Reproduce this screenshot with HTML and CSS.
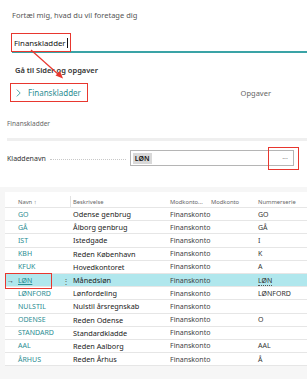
FILE: index.html
```html
<!DOCTYPE html>
<html lang="da">
<head>
    <meta charset="UTF-8">
    <meta name="viewport" content="width=device-width, initial-scale=1.0">
    <title>Finanskladder</title>
    <link rel="stylesheet" href="styles.css">
</head>
<body>
<div class="page">
    <div class="tell-me">
        <p class="prompt">Fortæl mig, hvad du vil foretage dig</p>
        <div class="search">
            <span class="search-text mark">Finanskladder<span class="caret"></span></span>
        </div>
        <h2 class="group-title">Gå til Sider og opgaver</h2>
        <div class="result-row">
            <div class="result mark">
                <svg class="chevron" width="5" height="8" viewBox="0 0 5 8"><path d="M0.8 0.6 L4.2 4 L0.8 7.4" fill="none" stroke="#3a9ea3" stroke-width="0.9"/></svg>
                <span>Finanskladder</span>
            </div>
            <span class="result-type">Opgaver</span>
        </div>
    </div>

    <div class="journal">
        <p class="page-caption">Finanskladder</p>
        <div class="divider"></div>
        <div class="field">
            <span class="field-label">Kladdenavn</span>
            <span class="leader"></span>
            <div class="field-input">
                <span class="selected">LØN</span>
                <span class="assist">···</span>
                <span class="assist-mark"></span>
            </div>
        </div>
    </div>

    <div class="list-area">
        <div class="list">
            <div class="row head">
                <span></span>
                <span class="sep">Navn ↑</span>
                <span>Beskrivelse</span>
                <span>Modkonto...</span>
                <span>Modkonto</span>
                <span>Nummerserie</span>
            </div>
            <div class="row"><span></span><span class="name">GO</span><span class="desc">Odense genbrug</span><span class="type">Finanskonto</span><span></span><span class="series">GO</span></div>
            <div class="row"><span></span><span class="name">GÅ</span><span class="desc">Ålborg genbrug</span><span class="type">Finanskonto</span><span></span><span class="series">GÅ</span></div>
            <div class="row"><span></span><span class="name">IST</span><span class="desc">Istedgade</span><span class="type">Finanskonto</span><span></span><span class="series">I</span></div>
            <div class="row"><span></span><span class="name">KBH</span><span class="desc">Reden København</span><span class="type">Finanskonto</span><span></span><span class="series">K</span></div>
            <div class="row"><span></span><span class="name">KFUK</span><span class="desc">Hovedkontoret</span><span class="type">Finanskonto</span><span></span><span class="series">A</span></div>
            <div class="row current">
                <span class="pointer">→</span>
                <span class="name"><u>LØN</u><span class="kebab">⋮</span></span>
                <span class="desc">Månedsløn</span>
                <span class="type">Finanskonto</span>
                <span></span>
                <span class="series"><span class="dotted">LØN</span></span>
                <span class="row-mark"></span>
            </div>
            <div class="row"><span></span><span class="name">LØNFORD</span><span class="desc">Lønfordeling</span><span class="type">Finanskonto</span><span></span><span class="series">LØNFORD</span></div>
            <div class="row"><span></span><span class="name">NULSTIL</span><span class="desc">Nulstil årsregnskab</span><span class="type">Finanskonto</span><span></span><span class="series"></span></div>
            <div class="row"><span></span><span class="name">ODENSE</span><span class="desc">Reden Odense</span><span class="type">Finanskonto</span><span></span><span class="series">O</span></div>
            <div class="row"><span></span><span class="name">STANDARD</span><span class="desc">Standardkladde</span><span class="type">Finanskonto</span><span></span><span class="series"></span></div>
            <div class="row"><span></span><span class="name">AAL</span><span class="desc">Reden Aalborg</span><span class="type">Finanskonto</span><span></span><span class="series">AAL</span></div>
            <div class="row"><span></span><span class="name">ÅRHUS</span><span class="desc">Reden Århus</span><span class="type">Finanskonto</span><span></span><span class="series">Å</span></div>
        </div>
    </div>

    <!-- annotation arrow -->
    <svg class="callout" width="307" height="100" viewBox="0 0 307 100">
        <line x1="31" y1="50" x2="59" y2="75" stroke="#e8372f" stroke-width="1.2"/>
        <path d="M63 78.5 L55.5 75.5 L60 71 Z" fill="#e8372f"/>
    </svg>
</div>
</body>
</html>
```

FILE: styles.css
```css
body, html {
    margin: 0;
    background-color: #ffffff;
    font-family: "Segoe UI", "Noto Sans", "Open Sans", Arial, sans-serif;
    color: #222;
}

.page {
    position: relative;
    width: 307px;
    height: 379px;
    overflow: hidden;
}

.mark {
    outline: 1.5px solid #e8372f;
}

/* tell me */
.tell-me {
    padding: 10px 0 0 12px;
    height: 88px;
}

.prompt {
    margin: 0;
    font-size: 7.5px;
    line-height: 10px;
    color: #555;
}

.search {
    margin-top: 14px;
    height: 17px;
    border-bottom: 2px solid #3aa3a6;
    display: flex;
    align-items: stretch;
}

.search-text {
    display: flex;
    align-items: center;
    padding: 0 2px 0 2px;
    font-size: 7.8px;
    color: #111;
}

.caret {
    display: inline-block;
    width: 1px;
    height: 10px;
    background: #111;
    margin-left: 1px;
}

.group-title {
    margin: 12px 0 0 3px;
    font-size: 7.5px;
    line-height: 10px;
    font-weight: 600;
    color: #333;
}

.result-row {
    margin-top: 9px;
    display: flex;
    align-items: center;
}

.result {
    margin-left: -1px;
    width: 76px;
    height: 17px;
    display: flex;
    align-items: center;
    box-sizing: border-box;
    padding-left: 5px;
    gap: 7px;
    font-size: 8px;
    color: #2b8d92;
}

.result-type {
    margin-left: auto;
    margin-right: 36px;
    font-size: 7.5px;
    color: #666;
}

/* journal header */
.journal {
    padding: 21px 0 0 7px;
    height: 68px;
}

.page-caption {
    margin: 0;
    font-size: 6.5px;
    line-height: 10px;
    color: #666;
}

.divider {
    margin-top: 9px;
    height: 3px;
    background: #efefef;
}

.field {
    margin-top: 9px;
    display: flex;
    align-items: center;
    height: 16px;
}

.field-label {
    font-size: 7px;
    color: #333;
}

.leader {
    width: 76px;
    margin: 3px 4px 0 4px;
    border-bottom: 1px dotted #c8c8c8;
}

.field-input {
    position: relative;
    width: 164px;
    height: 16px;
    box-sizing: border-box;
    border: 1px solid #b5b5b5;
    display: flex;
    align-items: center;
    padding-left: 2px;
}

.selected {
    background: #d9d9d9;
    font-size: 7px;
    font-weight: 600;
    padding: 1px 2px;
    color: #111;
}

.assist {
    margin-left: auto;
    margin-right: 5px;
    font-size: 7px;
    color: #888;
}

.assist-mark {
    position: absolute;
    left: 137px;
    top: -4px;
    width: 31px;
    height: 23px;
    box-sizing: border-box;
    border: 1.5px solid #e8372f;
}

/* list */
.list-area {
    background: #f6f6f6;
    padding: 5px 0 0 5px;
    height: 192px;
    box-sizing: border-box;
}

.list {
    background: #ffffff;
    padding-top: 4px;
}

.row {
    position: relative;
    display: grid;
    grid-template-columns: 13px 55px 97px 41px 47px 1fr;
    align-items: center;
    height: 13.2px;
    box-sizing: border-box;
    border-bottom: 1px solid #e6e6e6;
    font-size: 7px;
    white-space: nowrap;
}

.row.head {
    height: 12px;
    font-size: 5.8px;
    color: #666;
}

.row.head .sep {
    align-self: stretch;
    display: flex;
    align-items: center;
    border-right: 1px solid #e2e2e2;
    margin-right: 2px;
}

.name {
    color: #2b8d92;
    position: relative;
}

.desc {
    color: #222;
    font-size: 7.3px;
}

.type {
    color: #444;
}

.series {
    color: #333;
}

.row.current {
    background: #b0e7ed;
}

.pointer {
    padding-left: 2px;
    font-size: 7px;
    color: #333;
}

.kebab {
    position: absolute;
    left: 44px;
    top: -1px;
    color: #555;
    font-size: 8px;
}

.dotted {
    border-bottom: 1px dotted #555;
}

.row-mark {
    position: absolute;
    left: 0;
    top: -1px;
    width: 47px;
    height: 16px;
    box-sizing: border-box;
    border: 1.5px solid #e8372f;
}

.callout {
    position: absolute;
    left: 0;
    top: 0;
    pointer-events: none;
}
```
